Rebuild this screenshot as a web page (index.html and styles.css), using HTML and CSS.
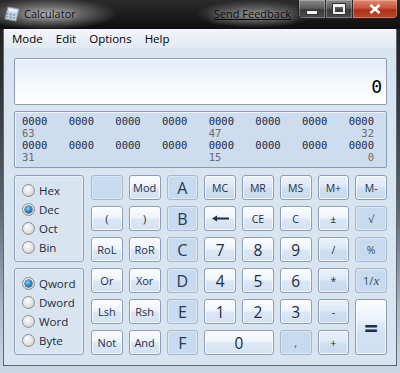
FILE: index.html
```html
<!DOCTYPE html>
<html lang="en">
<head>
    <meta charset="UTF-8">
    <title>Calculator</title>
    <link rel="stylesheet" href="styles.css">
</head>
<body>
    <div class="window">
        <div class="titlebar">
            <svg class="app-icon" width="16" height="16" viewBox="0 0 16 16">
                <path d="M4 1 L15 3 L12 15 L1 13 Z" fill="#c7d3df" stroke="#8a98a8" stroke-width="0.8"/>
                <path d="M5 2.6 L13.4 4.1 L12.8 6.6 L4.4 5.1 Z" fill="#e8f0f8"/>
                <g fill="#7f95ad">
                    <rect x="4" y="7" width="2" height="1.6" transform="skewX(-12)"/>
                    <rect x="7.5" y="7.6" width="2" height="1.6" transform="skewX(-12)"/>
                    <rect x="11" y="8.2" width="2" height="1.6" transform="skewX(-12)"/>
                    <rect x="4.5" y="10" width="2" height="1.6" transform="skewX(-12)"/>
                    <rect x="8" y="10.6" width="2" height="1.6" transform="skewX(-12)"/>
                    <rect x="11.5" y="11.2" width="2" height="1.6" transform="skewX(-12)"/>
                </g>
            </svg>
            <span class="title">Calculator</span>
            <span class="feedback">Send Feedback</span>
            <div class="caption">
                <span class="cap cap-min"><i></i></span>
                <span class="cap cap-max"><i></i></span>
                <span class="cap cap-close">
                    <svg width="12" height="10" viewBox="0 0 12 10"><path d="M1.5 1 L10.5 9 M10.5 1 L1.5 9" stroke="#fff" stroke-width="2.6"/></svg>
                </span>
            </div>
        </div>

        <div class="client">
            <div class="menubar">
                <span>Mode</span>
                <span>Edit</span>
                <span>Options</span>
                <span>Help</span>
            </div>

            <div class="main">
                <div class="display">0</div>

                <div class="bits">
                    <span>0000</span><span>0000</span><span>0000</span><span>0000</span>
                    <span>0000</span><span>0000</span><span>0000</span><span>0000</span>
                    <span class="lbl">63</span><span class="lbl c5">47</span><span class="lbl c8">32</span>
                    <span>0000</span><span>0000</span><span>0000</span><span>0000</span>
                    <span>0000</span><span>0000</span><span>0000</span><span>0000</span>
                    <span class="lbl">31</span><span class="lbl c5">15</span><span class="lbl c8">0</span>
                </div>

                <div class="keypad">
                    <div class="group group-base">
                        <label class="radio"><span class="dot"></span>Hex</label>
                        <label class="radio on"><span class="dot"></span>Dec</label>
                        <label class="radio"><span class="dot"></span>Oct</label>
                        <label class="radio"><span class="dot"></span>Bin</label>
                    </div>
                    <div class="group group-size">
                        <label class="radio on"><span class="dot"></span>Qword</label>
                        <label class="radio"><span class="dot"></span>Dword</label>
                        <label class="radio"><span class="dot"></span>Word</label>
                        <label class="radio"><span class="dot"></span>Byte</label>
                    </div>

                    <!-- row 1 -->
                    <span class="key off"></span>
                    <span class="key">Mod</span>
                    <span class="key off hex">A</span>
                    <span class="key mem">MC</span>
                    <span class="key mem">MR</span>
                    <span class="key mem">MS</span>
                    <span class="key mem">M+</span>
                    <span class="key mem">M-</span>

                    <!-- row 2 -->
                    <span class="key">(</span>
                    <span class="key">)</span>
                    <span class="key off hex">B</span>
                    <span class="key">
                        <svg width="17" height="7" viewBox="0 0 17 7"><path d="M4 3.5 H17" stroke="#1c2f4c" stroke-width="2"/><path d="M0 3.5 L5 0.5 L5 6.5 Z" fill="#1c2f4c"/></svg>
                    </span>
                    <span class="key small">CE</span>
                    <span class="key small">C</span>
                    <span class="key small">±</span>
                    <span class="key off small">√</span>

                    <!-- row 3 -->
                    <span class="key">RoL</span>
                    <span class="key">RoR</span>
                    <span class="key off hex">C</span>
                    <span class="key num">7</span>
                    <span class="key num">8</span>
                    <span class="key num">9</span>
                    <span class="key mem">/</span>
                    <span class="key off small">%</span>

                    <!-- row 4 -->
                    <span class="key">Or</span>
                    <span class="key">Xor</span>
                    <span class="key off hex">D</span>
                    <span class="key num">4</span>
                    <span class="key num">5</span>
                    <span class="key num">6</span>
                    <span class="key mem">*</span>
                    <span class="key off">1/<i class="ix">x</i></span>

                    <!-- row 5 -->
                    <span class="key">Lsh</span>
                    <span class="key">Rsh</span>
                    <span class="key off hex">E</span>
                    <span class="key num">1</span>
                    <span class="key num">2</span>
                    <span class="key num">3</span>
                    <span class="key mem">-</span>
                    <span class="key equals">=</span>

                    <!-- row 6 -->
                    <span class="key">Not</span>
                    <span class="key">And</span>
                    <span class="key off hex">F</span>
                    <span class="key num zero">0</span>
                    <span class="key off">,</span>
                    <span class="key mem">+</span>
                </div>
            </div>
        </div>
    </div>
</body>
</html>
```

FILE: styles.css
```css
body {
    margin: 0;
    background: #1b1b1b;
    font-family: 'Open Sans', 'Liberation Sans', sans-serif;
}

.window {
    width: 400px;
    height: 373px;
    display: flex;
    flex-direction: column;
    background: linear-gradient(to bottom, #1a1a1a 0%, #2e2e2e 20%, #5a6470 55%, #aebdcc 85%, #cdd9e6 100%);
    overflow: hidden;
}

/* Title bar */
.titlebar {
    height: 29px;
    flex: none;
    display: flex;
    align-items: flex-start;
    padding-left: 4px;
    background:
        radial-gradient(ellipse 70px 16px at 48px 14px, rgba(190, 190, 190, 0.85), transparent),
        radial-gradient(ellipse 60px 14px at 255px 14px, rgba(170, 170, 170, 0.7), transparent),
        linear-gradient(to bottom, #2b2b2b, #0d0d0d);
}

.app-icon {
    margin-top: 6px;
    flex: none;
}

.title {
    margin: 6px 0 0 4px;
    font-size: 11px;
    color: #111;
    text-shadow: 0 0 6px rgba(255, 255, 255, 0.6);
    flex: 1;
}

.feedback {
    margin-top: 6px;
    margin-right: 7px;
    font-size: 11px;
    color: #0b0b0b;
    text-decoration: underline;
    text-shadow: 0 0 6px rgba(255, 255, 255, 0.5);
}

.caption {
    display: flex;
    height: 18px;
    margin-right: 2px;
    border: 1px solid #222;
    border-top: none;
    border-radius: 0 0 5px 5px;
    overflow: hidden;
}

.cap {
    display: flex;
    align-items: center;
    justify-content: center;
    height: 18px;
    box-shadow: inset 0 0 0 1px rgba(255, 255, 255, 0.25);
}

.cap-min,
.cap-max {
    width: 26px;
    background: linear-gradient(to bottom, #8a8a8a 0%, #5c5c5c 45%, #3b3b3b 55%, #4e4e4e 100%);
    border-right: 1px solid #2a2a2a;
}

.cap-min i {
    width: 10px;
    height: 3px;
    margin-top: 6px;
    background: #f2f2f2;
    box-shadow: 0 0 0 1px #333;
}

.cap-max i {
    width: 8px;
    height: 5px;
    border: 2px solid #f2f2f2;
    border-top-width: 3px;
    box-shadow: 0 0 0 1px #333;
}

.cap-close {
    width: 44px;
    background: linear-gradient(to bottom, #e08a74 0%, #c8533a 45%, #a9301a 55%, #c4472c 100%);
}

/* Client area */
.client {
    flex: none;
    height: 336px;
    margin: 0 3px;
    border: 1px solid #5d6776;
    border-top: none;
    background: #d9e4f1;
    display: flex;
    flex-direction: column;
}

.menubar {
    height: 19px;
    flex: none;
    display: flex;
    align-items: center;
    gap: 13px;
    padding-left: 8px;
    font-size: 11.5px;
    color: #000;
    background: linear-gradient(to bottom, #f3f6fb, #e2e9f3);
}

.main {
    padding: 10px 9px 10px 10px;
    display: flex;
    flex-direction: column;
}

.display {
    height: 47px;
    box-sizing: border-box;
    border: 1px solid #8d9bb0;
    border-radius: 2px;
    background: linear-gradient(to bottom, #e2ebf7 0%, #f4f8fc 50%, #ffffff 100%);
    box-shadow: inset 0 1px 0 #fff;
    display: flex;
    justify-content: flex-end;
    align-items: flex-end;
    padding: 0 4px 8px 0;
    font-family: 'DejaVu Sans Mono', monospace;
    font-size: 18px;
    line-height: 18px;
    color: #000;
}

.bits {
    margin-top: 6px;
    height: 57px;
    box-sizing: border-box;
    border: 1px solid #8d9bb0;
    border-radius: 2px;
    background: #cddcee;
    box-shadow: inset 1px 1px 0 rgba(255, 255, 255, 0.7);
    padding: 3px 12px 0 7px;
    display: grid;
    grid-template-columns: repeat(7, 1fr) auto;
    grid-auto-rows: 12px;
    font-family: 'DejaVu Sans Mono', monospace;
    font-size: 10.5px;
    line-height: 12px;
    color: #1c2b48;
}

.bits .lbl {
    color: #6c6c6c;
}

.bits .c5 {
    grid-column: 5;
}

.bits .c8 {
    grid-column: 8;
    justify-self: end;
}

/* Keypad */
.keypad {
    margin-top: 7px;
    display: grid;
    grid-template-columns: 71px repeat(8, 1fr);
    grid-template-rows: repeat(6, 25px);
    gap: 6px;
}

.group {
    width: 70px;
    box-sizing: border-box;
    border: 1px solid #8fa1b9;
    border-radius: 3px;
    box-shadow: inset 0 0 0 1px rgba(255, 255, 255, 0.45);
    padding: 5px 0 0 7px;
    display: flex;
    flex-direction: column;
}

.group-base {
    grid-column: 1;
    grid-row: 1 / 4;
}

.group-size {
    grid-column: 1;
    grid-row: 4 / 7;
}

.radio {
    height: 19px;
    display: flex;
    align-items: center;
    gap: 4px;
    font-size: 11.5px;
    color: #1d2a3c;
}

.dot {
    width: 11px;
    height: 11px;
    border-radius: 50%;
    border: 1px solid #8e8f8f;
    background: radial-gradient(circle at 40% 35%, #ffffff, #d7d7d7 70%, #c4c4c4);
    position: relative;
}

.radio.on .dot::after {
    content: '';
    position: absolute;
    left: 2px;
    top: 2px;
    width: 7px;
    height: 7px;
    border-radius: 50%;
    background: radial-gradient(circle at 40% 35%, #7fd0ff, #1a78c8 60%, #0b3f7a);
    box-shadow: 0 0 0 0.5px #123b63;
}

.key {
    display: flex;
    align-items: center;
    justify-content: center;
    box-sizing: border-box;
    border: 1px solid #8c9db4;
    border-radius: 3px;
    background: linear-gradient(to bottom, #fbfdff 0%, #eef4fb 48%, #dbe7f5 52%, #d3e2f3 100%);
    box-shadow: inset 0 0 0 1px rgba(255, 255, 255, 0.75);
    font-size: 11px;
    color: #1c2f4c;
}

.key.mem {
    background: linear-gradient(to bottom, #eaf1fa 0%, #dde8f6 48%, #cfdff1 52%, #c9dbef 100%);
    font-size: 10.5px;
}

.key.small {
    font-size: 10.5px;
}

.key.off {
    border-color: #a5b8d0;
    background: #c8daee;
    box-shadow: inset 0 0 0 1px rgba(255, 255, 255, 0.35);
    color: #3b4e69;
}

.key.hex {
    font-size: 16px;
    color: #24395a;
}

.key.num {
    font-size: 15.5px;
    color: #1a2c48;
}

.zero {
    grid-column: span 2;
}

.equals {
    grid-row: span 2;
    font-size: 24px;
    font-weight: 700;
    background: linear-gradient(to bottom, #fbfdff 0%, #eaf2fb 35%, #d3e2f3 60%, #cddff1 100%);
}

.ix {
    font-family: 'Liberation Serif', serif;
    font-size: 13px;
}
```
